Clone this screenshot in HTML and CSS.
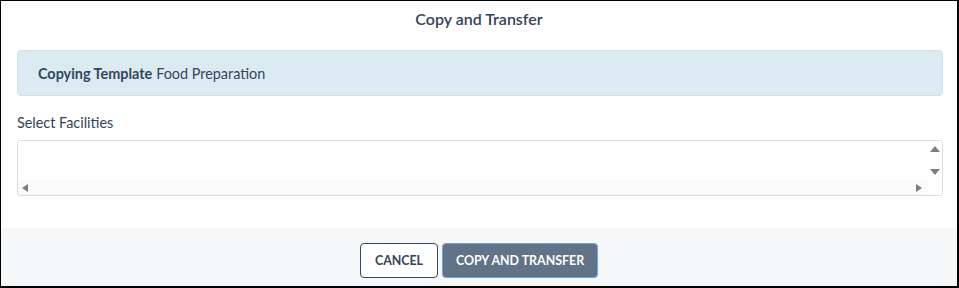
FILE: index.html
```html
<!DOCTYPE html>
<html>
<head>
<meta charset="utf-8">
<link rel="stylesheet" href="styles.css">
</head>
<body>
<div class="modal">
  <div class="modal-header">Copy and Transfer</div>
  <div class="modal-body">
    <div class="alert"><strong>Copying Template</strong> Food Preparation</div>
    <div class="field-label">Select Facilities</div>
    <div class="listbox">
      <div class="list-content"></div>
      <div class="vscroll">
        <span class="arrow up"></span>
        <span class="arrow down"></span>
      </div>
      <div class="hscroll">
        <span class="arrow left"></span>
        <span class="arrow right"></span>
      </div>
    </div>
  </div>
  <div class="modal-footer">
    <button class="btn btn-cancel">CANCEL</button>
    <button class="btn btn-primary">COPY AND TRANSFER</button>
  </div>
</div>
</body>
</html>
```
FILE: styles.css
```css
html, body {
  margin: 0;
  padding: 0;
  background: #fff;
}
body {
  font-family: Lato, "Noto Sans", sans-serif;
  color: #2f3e52;
}
.modal {
  box-sizing: border-box;
  width: 959px;
  height: 288px;
  border-top: 1px solid #000;
  border-left: 1px solid #000;
  border-right: 2px solid #000;
  border-bottom: 2px solid #000;
  display: flex;
  flex-direction: column;
  background: #fff;
}
.modal-header {
  height: 34px;
  display: flex;
  align-items: center;
  justify-content: center;
  font-size: 16px;
  font-weight: 600;
  color: #33445a;
}
.modal-body {
  flex: 1;
  padding: 15px 14px 0 16px;
}
.alert {
  box-sizing: border-box;
  height: 46px;
  display: flex;
  align-items: center;
  gap: 4px;
  padding-left: 20px;
  background: #dcebf2;
  border: 1px solid #c9e1ec;
  border-radius: 4px;
  font-size: 14.4px;
  color: #33475b;
}
.alert strong {
  font-weight: 700;
}
.field-label {
  margin-top: 18px;
  font-size: 14.4px;
  color: #33445a;
  line-height: 17px;
}
.listbox {
  box-sizing: border-box;
  margin-top: 9px;
  height: 56px;
  border: 1px solid #dcdcdc;
  border-radius: 3px;
  display: grid;
  grid-template-columns: 1fr 15px;
  grid-template-rows: 1fr 15px;
  overflow: hidden;
}
.list-content {
  background: #fff;
}
.vscroll {
  grid-row: 1 / 3;
  grid-column: 2;
  background: #fff;
  display: flex;
  flex-direction: column;
  align-items: center;
  padding-top: 5px;
  gap: 17px;
}
.hscroll {
  grid-row: 2;
  grid-column: 1;
  background: #fafafa;
  display: flex;
  align-items: center;
  justify-content: space-between;
  padding: 0 5px 0 4px;
}
.arrow {
  width: 0;
  height: 0;
  display: block;
}
.arrow.up {
  border-left: 5px solid transparent;
  border-right: 5px solid transparent;
  border-bottom: 6px solid #7d7d7d;
}
.arrow.down {
  border-left: 5px solid transparent;
  border-right: 5px solid transparent;
  border-top: 6px solid #7d7d7d;
}
.arrow.left {
  border-top: 4px solid transparent;
  border-bottom: 4px solid transparent;
  border-right: 6px solid #7d7d7d;
}
.arrow.right {
  border-top: 4px solid transparent;
  border-bottom: 4px solid transparent;
  border-left: 6px solid #7d7d7d;
}
.modal-footer {
  height: 58px;
  background: #f6f7f9;
  display: flex;
  justify-content: center;
  align-items: flex-start;
  padding-top: 15px;
  gap: 4px;
  box-sizing: border-box;
}
.btn {
  font-family: Lato, "Noto Sans", sans-serif;
  font-size: 12.4px;
  font-weight: 700;
  height: 35px;
  border-radius: 4px;
  cursor: pointer;
}
.btn-cancel {
  width: 78px;
  background: #fff;
  color: #33445a;
  border: 1px solid #34465c;
}
.btn-primary {
  width: 156px;
  background: #627287;
  color: #fff;
  border: 1px solid #6aa6e2;
}
```
